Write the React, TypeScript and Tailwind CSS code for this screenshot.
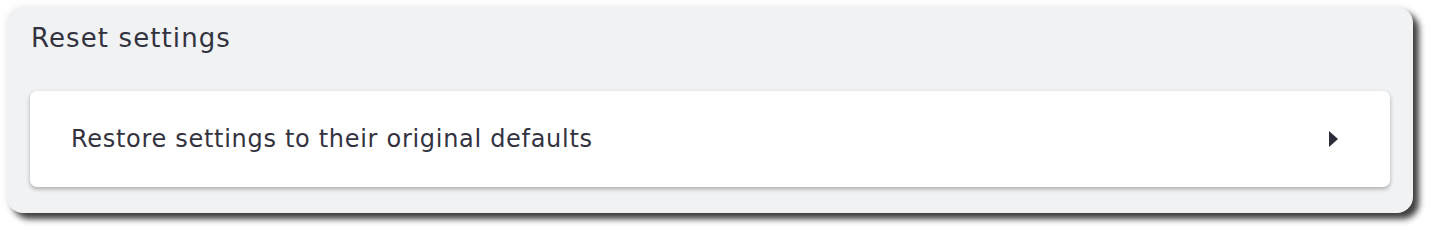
import React from "react";

export default function App() {
  return (
    <div className="w-[1436px] h-[236px] bg-white pt-[7px] pl-[7px]" style={{ fontFamily: "'DejaVu Sans', sans-serif" }}>
      <div className="w-[1406px] h-[206px] bg-[#f1f2f4] rounded-[16px] shadow-[6px_6px_6px_rgba(0,0,0,0.75),0_0_8px_rgba(0,0,0,0.08)] px-[23px] pt-[11px]">
        <h2 className="text-[26px] leading-[40px] text-[#33333f] pl-[1px] tracking-[1.1px]">Reset settings</h2>
        <div className="mt-[33px] h-[96px] bg-white rounded-[7px] shadow-[0_2px_4px_rgba(0,0,0,0.3)] flex items-center justify-between pl-[41px] pr-[52px]">
          <span className="text-[24px] text-[#33333f] tracking-[0.7px]">Restore settings to their original defaults</span>
          <svg width="9" height="16" viewBox="0 0 9 16" className="block">
            <path d="M0 0 L9 8 L0 16 Z" fill="#2b2b3b" />
          </svg>
        </div>
      </div>
    </div>
  );
}
